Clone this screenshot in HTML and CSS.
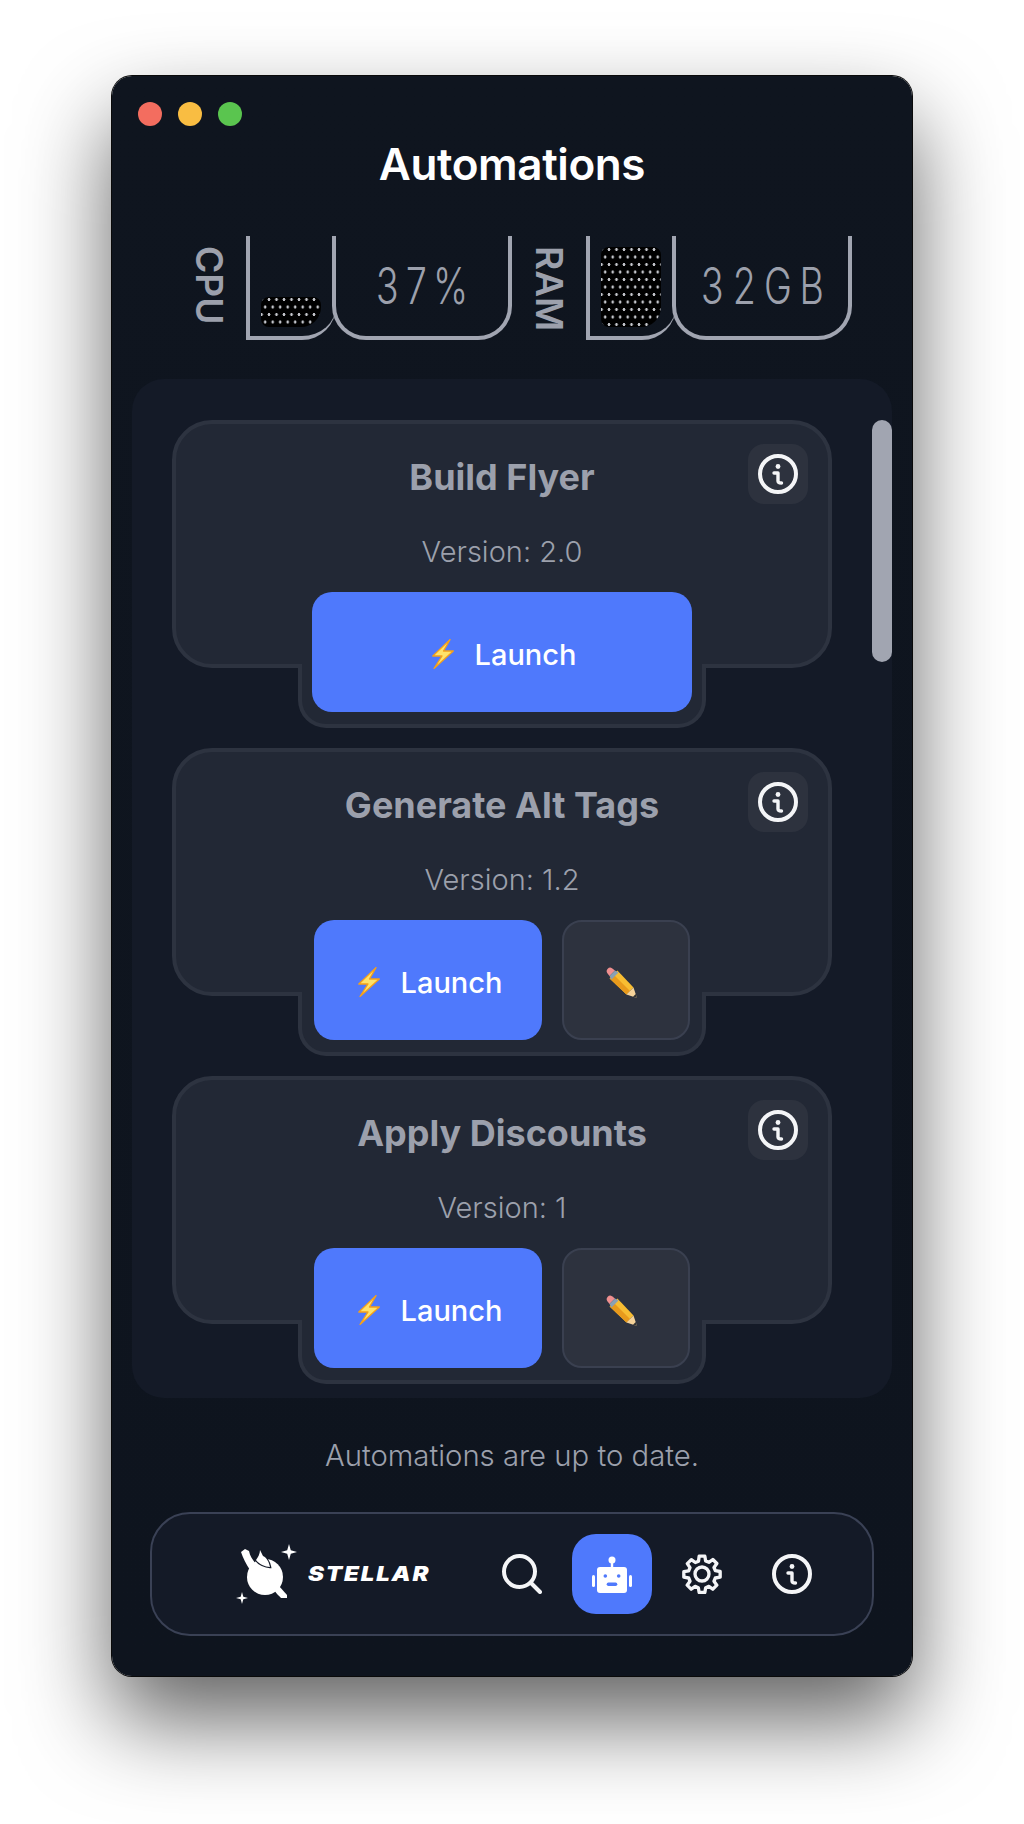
FILE: index.html
```html
<!DOCTYPE html>
<html lang="en">
<head>
<meta charset="utf-8">
<title>Automations</title>
<link rel="stylesheet" href="styles.css">
</head>
<body>
<main class="window">
  <div class="lights"><span class="light red"></span><span class="light yellow"></span><span class="light green"></span></div>
  <h1 class="title">Automations</h1>
  <section class="gauges">
    <div class="gauge">
      <span class="gauge-label">CPU</span>
      <div class="meter"><div class="dots dots-cpu"></div></div>
      <div class="readout"><span class="lcd lcd-cpu">37%</span></div>
    </div>
    <div class="gauge">
      <span class="gauge-label">RAM</span>
      <div class="meter"><div class="dots dots-ram"></div></div>
      <div class="readout"><span class="lcd lcd-ram">32GB</span></div>
    </div>
  </section>
  <section class="panel">
    <div class="scrollbar"></div>
    <article class="card">
      <div class="card-body">
        <button class="info-btn"><svg class="icon" viewBox="0 0 40 40"><use href="#info"/></svg></button>
        <h2 class="card-title">Build Flyer</h2>
        <p class="card-version">Version: 2.0</p>
      </div>
      <div class="card-tab">
        <button class="launch launch-wide"><svg class="bolt" viewBox="0 0 22 30"><use href="#bolt"/></svg>Launch</button>
      </div>
    </article>
    <article class="card">
      <div class="card-body">
        <button class="info-btn"><svg class="icon" viewBox="0 0 40 40"><use href="#info"/></svg></button>
        <h2 class="card-title">Generate Alt Tags</h2>
        <p class="card-version">Version: 1.2</p>
      </div>
      <div class="card-tab">
        <button class="launch"><svg class="bolt" viewBox="0 0 22 30"><use href="#bolt"/></svg>Launch</button>
        <button class="edit"><svg class="pencil" viewBox="0 0 32 32"><use href="#pencil"/></svg></button>
      </div>
    </article>
    <article class="card">
      <div class="card-body">
        <button class="info-btn"><svg class="icon" viewBox="0 0 40 40"><use href="#info"/></svg></button>
        <h2 class="card-title">Apply Discounts</h2>
        <p class="card-version">Version: 1</p>
      </div>
      <div class="card-tab">
        <button class="launch"><svg class="bolt" viewBox="0 0 22 30"><use href="#bolt"/></svg>Launch</button>
        <button class="edit"><svg class="pencil" viewBox="0 0 32 32"><use href="#pencil"/></svg></button>
      </div>
    </article>
  </section>
  <p class="status">Automations are up to date.</p>
  <nav class="nav">
    <div class="brand">
      <svg class="brand-mark" viewBox="0 0 60 60">
        <circle cx="29" cy="33" r="18" fill="#fff"/>
        <path d="M38 46 L43 42 L51 51 L51 54 L45 54 C43 52 40 49 38 46Z" fill="#fff"/>
        <path d="M24 6 L27 12 C31 14 33 18 34 23 C29 23 23 20 20 16 C22 13 24 10 24 6Z" fill="#fff" stroke="#141a27" stroke-width="2.500" paint-order="stroke"/>
        <path d="M5 8 L9 5 L13 7 C14 12 16 15 20 20 L14 26 C10 20 7 14 5 8Z" fill="#fff"/>
        <path d="M53 0 L54.800 6.200 L61 8 L54.800 9.800 L53 16 L51.200 9.800 L45 8 L51.200 6.200Z" fill="#fff"/>
        <path d="M6 48 L7.300 52.700 L12 54 L7.300 55.300 L6 60 L4.700 55.300 L0 54 L4.700 52.700Z" fill="#fff"/>
      </svg>
      <span class="brand-name">STELLAR</span>
    </div>
    <div class="nav-items">
      <button class="nav-btn"><svg class="icon" viewBox="0 0 40 40"><circle cx="17.500" cy="17.500" r="15.500" fill="none" stroke="currentColor" stroke-width="4"/><path d="M29 29 L38 38" stroke="currentColor" stroke-width="4" stroke-linecap="round"/></svg></button>
      <button class="nav-btn nav-active"><svg class="icon" viewBox="0 0 40 40"><rect x="5" y="13" width="30" height="26" rx="3" fill="currentColor"/><rect x="0" y="21" width="3" height="12" rx="1.500" fill="currentColor"/><rect x="37" y="21" width="3" height="12" rx="1.500" fill="currentColor"/><rect x="18.800" y="8" width="2.400" height="6" fill="currentColor"/><circle cx="20" cy="6" r="3.500" fill="currentColor"/><circle cx="13.300" cy="22" r="1.800" fill="#4f79fc"/><circle cx="26.700" cy="22" r="1.800" fill="#4f79fc"/><rect x="14.700" y="28.500" width="10.600" height="3.500" rx="1.700" fill="#4f79fc"/></svg></button>
      <button class="nav-btn"><svg class="icon" viewBox="0 0 24 24" fill="none" stroke="currentColor" stroke-width="2" stroke-linejoin="round"><path d="M10.300 1.400h3.400l.5 2.900 1.900.8 2.400-1.700 2.400 2.400-1.700 2.400.8 1.900 2.900.5v3.400l-2.900.5-.8 1.900 1.700 2.400-2.400 2.400-2.400-1.700-1.900.8-.5 2.900h-3.400l-.5-2.900-1.900-.8-2.400 1.700-2.400-2.400 1.700-2.400-.8-1.900-2.900-.5V10.700l2.900-.5.8-1.900L3.200 5.900l2.400-2.400L8 5.200l1.900-.8z" transform="translate(0 -.1)"/><circle cx="12" cy="12" r="4.200"/></svg></button>
      <button class="nav-btn"><svg class="icon" viewBox="0 0 40 40"><use href="#info"/></svg></button>
    </div>
  </nav>
</main>
<svg class="defs" aria-hidden="true">
  <defs>
    <g id="info">
      <circle cx="20" cy="20" r="18" fill="none" stroke="currentColor" stroke-width="4"/>
      <circle cx="20" cy="12.500" r="2.400" fill="currentColor"/>
      <path d="M16 19h4v8c0 1.500 1 2 3.500 2" fill="none" stroke="currentColor" stroke-width="3.400" stroke-linecap="round" stroke-linejoin="round"/>
    </g>
    <g id="bolt">
      <path d="M18 .6 L.8 17 L10 17 L2 29.500 L21.300 12 L11.500 12 Z" fill="#ffe26a" stroke="#f5a019" stroke-width="1.300" stroke-linejoin="round"/>
    </g>
    <g id="pencil">
      <path d="M11.400 3.600 L27.500 20.500 L20.500 27.500 L3.600 11.400 Z" fill="#f8bd32"/>
      <path d="M7.500 7.500 L24 24 L20.500 27.500 L3.600 11.400 Z" fill="#e89a1c"/>
      <path d="M27.500 20.500 L31 31 L20.500 27.500 Z" fill="#f5d29a"/>
      <path d="M31 31 L29.800 27 L27 29.800 Z" fill="#333"/>
      <path d="M1.200 6 A3.500 3.500 0 0 1 6 1.200 L9 3.500 L3.500 9 Z" fill="#ef8f8f"/>
      <path d="M9 3.500 L12.500 5.500 L5.500 12.500 L3.500 9 Z" fill="#8aa0b4"/>
    </g>
  </defs>
</svg>
</body>
</html>
```
FILE: styles.css
```css
* { box-sizing: border-box; margin: 0; padding: 0; }
html, body { width: 1024px; height: 1824px; overflow: hidden; }
body { background: #fff; padding: 76px 112px 0; font-family: "Inter", "Liberation Sans", sans-serif; }
button { font-family: inherit; border: 0; cursor: pointer; }
.defs { width: 0; height: 0; display: block; }
.window {
  width: 800px; height: 1600px; display: flex; flex-direction: column; align-items: stretch;
  position: relative; border-radius: 20px;
  background: linear-gradient(180deg, #0f151f, #0e141e);
  padding: 0 20px;
  box-shadow: 0 0 0 1px #0a0a0a, 0 44px 90px rgba(0,0,0,.62);
}
.lights { display: flex; gap: 16px; padding: 26px 0 0 6px; height: 50px; }
.light { width: 24px; height: 24px; border-radius: 50%; }
.red { background: #f36d5f; }
.yellow { background: #f9bd42; }
.green { background: #5ac54f; }
.title { color: #fff; font-size: 44px; font-weight: 600; letter-spacing: -.4px; line-height: 52px; text-align: center; margin-top: 12px; }
.gauges { display: flex; justify-content: flex-end; gap: 22px; margin: 46px 0 0; padding-right: 40px; height: 104px; }
.gauge { display: flex; align-items: stretch; height: 104px; }
.gauge-label {
  writing-mode: vertical-rl; color: #9ca0ac; font-size: 37px; font-weight: 600; line-height: 30px;
  width: 30px; height: 104px; margin-right: 22px; text-align: left; padding-top: 10px;
}
.meter {
  width: 90px; height: 104px; border-left: 4px solid #a1a5b1; border-bottom: 4px solid #a1a5b1;
  border-bottom-right-radius: 34px; display: flex; align-items: flex-end; padding: 0 0 9px 11px;
  margin-right: -4px; position: relative;
}
.dots {
  width: 60px; border-radius: 8px 8px 20px 8px;
  background-color: #000;
  background-image: radial-gradient(circle, #c4c6cc 1.100px, transparent 1.700px), radial-gradient(circle, #c4c6cc 1.100px, transparent 1.700px);
  background-size: 7.500px 15px; background-position: -3.250px -5px, .450px 2.500px;
}
.dots-cpu { height: 30px; }
.dots-ram { height: 80px; }
.readout {
  width: 180px; height: 104px; border: 4px solid #a1a5b1; border-top: 0;
  border-radius: 0 0 34px 34px; display: flex; align-items: center; justify-content: center;
}
.lcd {
  color: #9ca0ac; font-weight: 300; font-size: 50px; line-height: 50px; white-space: nowrap; flex: none;
  display: inline-block; transform: scaleX(.75); font-feature-settings: "tnum";
}
.lcd-cpu { letter-spacing: 6px; padding-left: 6px; }
.lcd-ram { letter-spacing: 10px; padding-left: 10px; }
.panel {
  width: 760px; height: 1019px; margin-top: 39px; position: relative; overflow: hidden;
  background: #141a27; border-radius: 32px; padding: 41px 60px 0 40px;
  display: flex; flex-direction: column; gap: 20px;
}
.scrollbar { position: absolute; top: 41px; right: 0; width: 20px; height: 242px; background: #a1a5b1; border-radius: 10px; }
.card { display: flex; flex-direction: column; align-items: center; flex: none; }
.card-body {
  width: 660px; height: 248px; background: #222835; border: 4px solid #2d3340; border-radius: 40px;
  display: flex; flex-direction: column; align-items: center; position: relative;
}
.info-btn {
  position: absolute; top: 20px; right: 20px; width: 60px; height: 60px; border-radius: 16px; background: #2d323e;
  color: #f4f5f7; display: flex; align-items: center; justify-content: center;
}
.icon { width: 40px; height: 40px; display: block; }
.card-title { color: #9ca0ac; font-size: 36px; font-weight: 700; line-height: 44px; margin-top: 31px; text-align: center; }
.card-version { color: #9ca0ac; font-size: 29px; font-weight: 300; line-height: 36px; margin-top: 35px; text-align: center; }
.card-tab {
  width: 408px; height: 64px; margin-top: -4px; background: #222835;
  border: 4px solid #2d3340; border-top: 0; border-radius: 0 0 28px 28px;
  display: flex; justify-content: center; align-items: flex-start; gap: 20px; position: relative;
}
.launch {
  width: 228px; height: 120px; margin-top: -72px; padding: 4px 0 0 4px; background: #4f79fc; border-radius: 20px; color: #fff;
  font-size: 29px; font-weight: 500; display: flex; align-items: center; justify-content: center; gap: 21px; flex: none;
}
.launch-wide { width: 380px; }
.bolt { width: 22px; height: 30px; display: block; }
.edit {
  width: 128px; height: 120px; margin-top: -72px; background: #2d323e; border: 2px solid #3a4050; border-radius: 20px;
  display: flex; align-items: center; justify-content: center; flex: none;
}
.pencil { width: 32px; height: 32px; display: block; margin: 5px 8px 0 0; }
.status { color: #9ca0ac; font-size: 29.300px; font-weight: 300; line-height: 36px; text-align: center; margin-top: 40px; }
.nav {
  width: 724px; height: 124px; margin: 38px 0 0 18px; background: #141a27; border: 2px solid #3a4155; border-radius: 40px;
  display: flex; align-items: center; padding: 0 60px 0 84px;
}
.brand { display: flex; align-items: center; gap: 12px; }
.brand-mark { width: 60px; height: 60px; display: block; overflow: visible; }
.brand-name { color: #fff; font-size: 20px; font-weight: 900; font-style: oblique; letter-spacing: 1.500px; line-height: 24px; transform: scaleX(1.2); transform-origin: left; }
.nav-items { display: flex; align-items: center; margin-left: auto; gap: 50px; color: #f4f5f7; }
.nav-btn { width: 40px; height: 40px; background: transparent; color: #f4f5f7; display: flex; align-items: center; justify-content: center; flex: none; }
.nav-active { width: 80px; height: 80px; margin: 0 -20px; background: #4f79fc; border-radius: 24px; color: #fff; }
```
